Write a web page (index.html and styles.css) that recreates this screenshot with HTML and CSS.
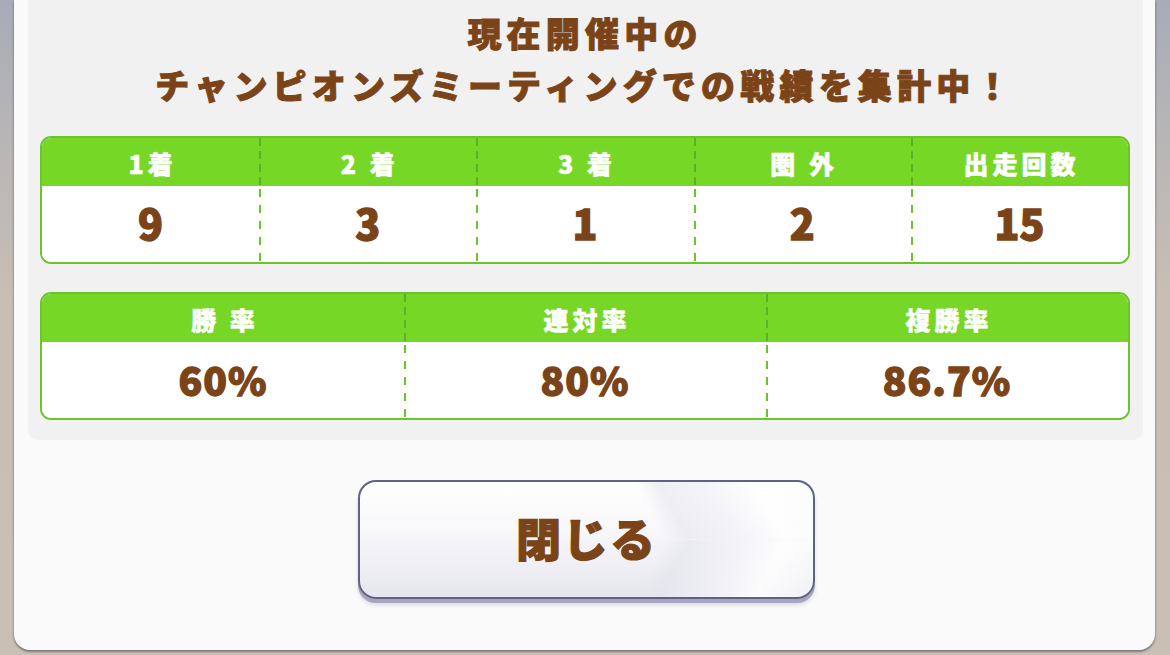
FILE: index.html
```html
<!DOCTYPE html>
<html lang="ja">
<head>
<meta charset="utf-8">
<title>戦績</title>
<link rel="stylesheet" href="styles.css">
</head>
<body>
<div class="dialog">
  <div class="panel">
    <h1 class="title"><span>現在開催中の</span><span>チャンピオンズミーティングでの戦績を集計中！</span></h1>
    <div class="stat-table cols-5">
      <div class="head">1着</div>
      <div class="head sep">2 着</div>
      <div class="head sep">3 着</div>
      <div class="head sep">圏 外</div>
      <div class="head sep">出走回数</div>
      <div class="val">9</div>
      <div class="val sep">3</div>
      <div class="val sep">1</div>
      <div class="val sep">2</div>
      <div class="val sep">15</div>
    </div>
    <div class="stat-table cols-3">
      <div class="head">勝 率</div>
      <div class="head sep">連対率</div>
      <div class="head sep">複勝率</div>
      <div class="val pct">60%</div>
      <div class="val pct sep">80%</div>
      <div class="val pct sep">86.7%</div>
    </div>
  </div>
  <div class="actions">
    <button class="close-btn" type="button">閉じる</button>
  </div>
</div>
</body>
</html>
```

FILE: styles.css
```css
html, body {
  margin: 0;
  padding: 0;
}
body {
  width: 1170px;
  height: 655px;
  overflow: hidden;
  background: linear-gradient(to bottom, #a8acb8 0px, #b9b6b6 150px, #c8beb4 300px, #c9bfb5 655px);
  font-family: "Noto Sans CJK JP", "Noto Sans", sans-serif;
}
.dialog {
  margin-left: 14px;
  width: 1141px;
  height: 650px;
  box-sizing: border-box;
  background: #fafafa;
  border-radius: 0 0 16px 16px;
  box-shadow: 0 2px 2px rgba(60, 60, 70, 0.45), 0 0 3px rgba(0, 0, 0, 0.25);
  padding: 0 12px 0 14px;
  display: flex;
  flex-direction: column;
}
.panel {
  background: #f1f1f1;
  height: 440px;
  box-sizing: border-box;
  border-radius: 0 0 10px 10px;
  padding: 7px 13px 20px 12px;
  display: flex;
  flex-direction: column;
  gap: 28px;
}
.title {
  margin: 0 0 -3px;
  display: flex;
  flex-direction: column;
  align-items: center;
  font-size: 34px;
  line-height: 52px;
  font-weight: 900;
  color: #7b4418;
  letter-spacing: 5.2px;
  -webkit-text-stroke: 1px #7b4418;
  text-shadow: 0 0 2px #fff;
}
.stat-table {
  display: grid;
  grid-template-rows: 48px 76px;
  border: 2px solid #6cc42c;
  border-radius: 11px;
  overflow: hidden;
  background: #fff;
}
.cols-5 { grid-template-columns: repeat(5, 1fr); }
.cols-3 { grid-template-columns: repeat(3, 1fr); }
.head {
  background-color: #77d726;
  color: #fff;
  font-size: 25px;
  font-weight: 900;
  letter-spacing: 4px;
  -webkit-text-stroke: 0.5px #fff;
  display: flex;
  align-items: center;
  justify-content: center;
  padding-top: 2px;
  padding-left: 4px;
}
.val {
  background-color: #fff;
  color: #7b4418;
  font-size: 41px;
  font-weight: 900;
  -webkit-text-stroke: 1.3px #7b4418;
  display: flex;
  align-items: center;
  justify-content: center;
  padding-bottom: 4px;
}
.val.pct {
  font-size: 39px;
  letter-spacing: 1px;
  padding-bottom: 2px;
}
.head.sep {
  background-image: repeating-linear-gradient(to bottom, #5cb12a 0 8px, transparent 8px 13px);
  background-size: 2px 100%;
  background-repeat: no-repeat;
  background-position: left top;
}
.val.sep {
  background-image: repeating-linear-gradient(to bottom, transparent 0 3px, #6cc42c 3px 11px, transparent 11px 16px);
  background-size: 2px 100%;
  background-repeat: no-repeat;
  background-position: left top;
}
.actions {
  display: flex;
  justify-content: center;
  padding-top: 40px;
}
.close-btn {
  width: 457px;
  height: 119px;
  margin-left: 2px;
  border: 2px solid #5f6286;
  border-radius: 18px;
  background:
    linear-gradient(62deg, rgba(255,255,255,0) 0%, rgba(255,255,255,0) 63%, rgba(228,228,237,0.6) 68%, rgba(240,240,246,0.7) 77%, rgba(255,255,255,0.85) 88%, rgba(250,250,252,0.5) 100%) top / 100% 50% no-repeat,
    linear-gradient(118deg, rgba(255,255,255,0) 0%, rgba(255,255,255,0) 63%, rgba(228,228,237,0.6) 68%, rgba(240,240,246,0.7) 77%, rgba(255,255,255,0.85) 88%, rgba(250,250,252,0.5) 100%) bottom / 100% 50% no-repeat,
    linear-gradient(to bottom, #ffffff 0%, #f7f7fa 45%, #e6e6ee 100%);
  box-shadow: 0 4px 0 #a7a5c0, 0 6px 4px rgba(40, 40, 70, 0.15);
  font-family: "Noto Sans CJK JP", "Noto Sans", sans-serif;
  font-size: 45px;
  font-weight: 900;
  color: #7b4418;
  letter-spacing: 2px;
  -webkit-text-stroke: 1.2px #7b4418;
  padding: 0 0 4px;
  cursor: pointer;
}
```
